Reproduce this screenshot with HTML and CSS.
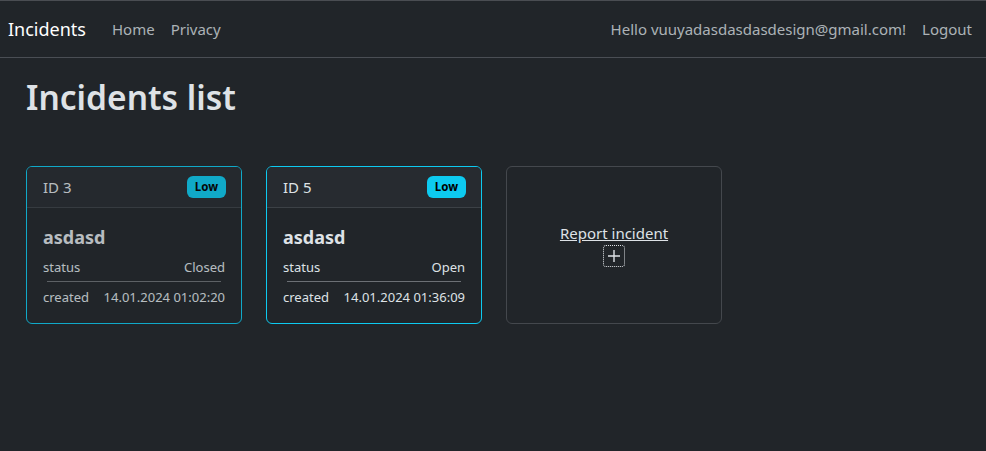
FILE: index.html
```html
<!DOCTYPE html>
<html lang="en">
<head>
<meta charset="utf-8">
<title>Incidents</title>
<link rel="stylesheet" href="styles.css">
</head>
<body>
<header class="navbar">
  <div class="nav-left">
    <a class="brand" href="#">Incidents</a>
    <a class="nav-link" href="#">Home</a>
    <a class="nav-link" href="#">Privacy</a>
  </div>
  <div class="nav-right">
    <span class="nav-link">Hello vuuyadasdasdasdesign@gmail.com!</span>
    <a class="nav-link" href="#">Logout</a>
  </div>
</header>
<main class="main">
  <h1 class="title">Incidents list</h1>
  <div class="cards">
    <div class="card card-info card-closed">
      <div class="card-header"><span>ID 3</span><span class="badge">Low</span></div>
      <div class="card-body">
        <h5 class="card-title">asdasd</h5>
        <div class="row"><span>status</span><span>Closed</span></div>
        <hr class="sep">
        <div class="row"><span>created</span><span>14.01.2024 01:02:20</span></div>
      </div>
    </div>
    <div class="card card-info">
      <div class="card-header"><span>ID 5</span><span class="badge">Low</span></div>
      <div class="card-body">
        <h5 class="card-title">asdasd</h5>
        <div class="row"><span>status</span><span>Open</span></div>
        <hr class="sep">
        <div class="row"><span>created</span><span>14.01.2024 01:36:09</span></div>
      </div>
    </div>
    <div class="card card-add">
      <a class="add-link" href="#">Report incident</a>
      <span class="add-btn">
        <svg width="16" height="16" viewBox="0 0 16 16"><path d="M8 2v12M2 8h12" stroke="#dee2e6" stroke-width="1.4" fill="none"/></svg>
      </span>
    </div>
  </div>
</main>
</body>
</html>
```
FILE: styles.css
```css
* { box-sizing: border-box; }
html, body { margin: 0; padding: 0; }
body {
  background: #212529;
  color: #dee2e6;
  font-family: "Noto Sans", "Open Sans", sans-serif;
  font-size: 15px;
  line-height: 1.5;
  border-top: 1px solid #4a4d52;
}
a { color: inherit; }
.navbar {
  height: 57px;
  display: flex;
  justify-content: space-between;
  align-items: center;
  padding: 0 6px 0 8px;
  border-bottom: 1px solid #4a4e54;
}
.nav-left, .nav-right { display: flex; align-items: center; }
.brand {
  font-size: 18px;
  color: #ffffff;
  text-decoration: none;
  margin-right: 18px;
}
.nav-link {
  color: rgba(222,226,230,0.75);
  text-decoration: none;
  padding: 0 8px;
}
.main { padding: 0 26px; }
.title {
  font-size: 33.5px;
  font-weight: 600;
  line-height: 1.2;
  margin: 19px 0 49px;
  color: #dee2e6;
}
.cards { display: flex; gap: 24px; }
.card {
  width: 216px;
  height: 158px;
  border: 1px solid #495057;
  border-radius: 6px;
  background: #212529;
  display: flex;
  flex-direction: column;
}
.card-info { border-color: #0dcaf0; }
.card-closed { opacity: 0.8; }
.card-header {
  height: 41px;
  display: flex;
  justify-content: space-between;
  align-items: center;
  padding: 0 15px 0 16px;
  background: #272b30;
  border-bottom: 1px solid #3c4146;
  border-radius: 5px 5px 0 0;
}
.badge {
  background: #0dcaf0;
  color: #000;
  font-size: 11.5px;
  font-weight: 700;
  line-height: 1;
  padding: 5px 8px;
  border-radius: 6px;
}
.card-body { padding: 19px 16px 0; font-size: 13px; }
.card-title {
  font-size: 18px;
  font-weight: 700;
  margin: 0 0 9px;
  line-height: 1.2;
}
.row { display: flex; justify-content: space-between; }
.sep {
  border: 0;
  border-top: 1px solid #6c7075;
  margin: 4px 4px 6px;
}
.card-add {
  align-items: center;
  justify-content: center;
  background: #212529;
  border-color: #44484d;
}
.add-link {
  font-size: 15px;
  color: #dee2e6;
  text-decoration: underline;
  line-height: 1.2;
}
.add-btn {
  width: 22px;
  height: 22px;
  border: 1px dotted #dee2e6;
  border-radius: 3px;
  display: flex;
  align-items: center;
  justify-content: center;
  margin-top: 3px;
}
```
